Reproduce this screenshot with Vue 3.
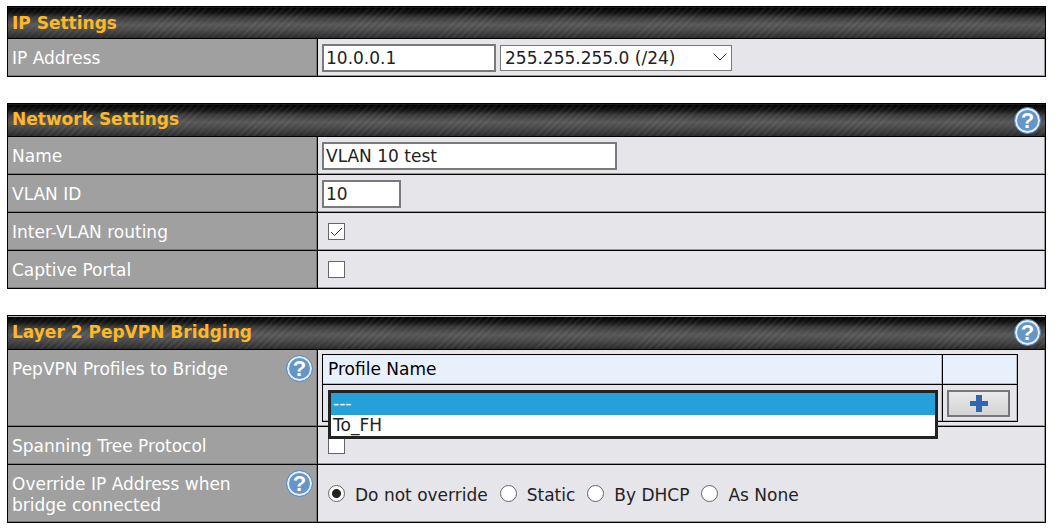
<script setup>
import { ref } from 'vue'

const ip = ref('10.0.0.1')
const mask = ref('255.255.255.0 (/24)')
const name = ref('VLAN 10 test')
const vlanId = ref('10')
const interVlan = ref(true)
const captivePortal = ref(false)
const spanningTree = ref(false)
const profile = ref('---')
const profiles = ['---', 'To_FH']
const override = ref('Do not override')
const overrideOptions = ['Do not override', 'Static', 'By DHCP', 'As None']
</script>

<template>
  <main class="page">
    <table class="panel">
      <colgroup><col class="label-col" /><col /></colgroup>
      <thead>
        <tr><th colspan="2" class="title plain">IP Settings</th></tr>
      </thead>
      <tbody>
        <tr>
          <th class="label" scope="row"><label for="ip">IP Address</label></th>
          <td class="value">
            <div class="fields">
              <input id="ip" v-model="ip" class="text ip" type="text" />
              <span class="select-wrap">
                <select v-model="mask" class="mask" aria-label="Subnet mask">
                  <option>255.255.255.0 (/24)</option>
                </select>
                <svg class="chevron" width="14" height="8" viewBox="0 0 14 8" aria-hidden="true">
                  <path d="M0.5 0.5 L7 7 L13.5 0.5" />
                </svg>
              </span>
            </div>
          </td>
        </tr>
      </tbody>
    </table>

    <table class="panel">
      <colgroup><col class="label-col" /><col /></colgroup>
      <thead>
        <tr>
          <th colspan="2" class="title">
            <div class="bar"><span>Network Settings</span><button class="help" type="button" aria-label="Help">?</button></div>
          </th>
        </tr>
      </thead>
      <tbody>
        <tr>
          <th class="label" scope="row"><label for="name">Name</label></th>
          <td class="value"><div class="fields"><input id="name" v-model="name" class="text name" type="text" /></div></td>
        </tr>
        <tr>
          <th class="label" scope="row"><label for="vlan">VLAN ID</label></th>
          <td class="value"><div class="fields"><input id="vlan" v-model="vlanId" class="text vlan" type="text" /></div></td>
        </tr>
        <tr>
          <th class="label" scope="row"><label for="inter">Inter-VLAN routing</label></th>
          <td class="value"><div class="fields"><span class="check">
            <input id="inter" v-model="interVlan" type="checkbox" />
            <svg v-if="interVlan" class="tick" width="17" height="17" viewBox="0 0 17 17" aria-hidden="true"><path d="M3 9 L6.5 12.5 L14 5" /></svg>
          </span></div></td>
        </tr>
        <tr>
          <th class="label" scope="row"><label for="portal">Captive Portal</label></th>
          <td class="value"><div class="fields"><span class="check"><input id="portal" v-model="captivePortal" type="checkbox" /></span></div></td>
        </tr>
      </tbody>
    </table>

    <table class="panel">
      <colgroup><col class="label-col" /><col /></colgroup>
      <thead>
        <tr>
          <th colspan="2" class="title ruled">
            <div class="bar"><span>Layer 2 PepVPN Bridging</span><button class="help" type="button" aria-label="Help">?</button></div>
          </th>
        </tr>
      </thead>
      <tbody>
        <tr>
          <th class="label" scope="row">
            <div class="with-help"><label for="profile">PepVPN Profiles to Bridge</label><button class="help" type="button" aria-label="Help">?</button></div>
          </th>
          <td class="value">
            <table class="profiles">
              <colgroup><col /><col class="action-col" /></colgroup>
              <thead>
                <tr><th scope="col">Profile Name</th><th></th></tr>
              </thead>
              <tbody>
                <tr>
                  <td>
                    <div class="picker">
                      <select id="profile" v-model="profile" class="profile">
                        <option v-for="p in profiles" :key="p">{{ p }}</option>
                      </select>
                      <ul class="menu" role="listbox" aria-label="Profile Name">
                        <li v-for="p in profiles" :key="p" role="option" :aria-selected="p === profile" :class="{ active: p === profile }" @click="profile = p">{{ p }}</li>
                      </ul>
                    </div>
                  </td>
                  <td>
                    <button class="add" type="button" aria-label="Add profile">
                      <svg width="18" height="17" viewBox="0 0 18 17" aria-hidden="true"><path d="M6 0 H12 V6 H18 V11 H12 V17 H6 V11 H0 V6 H6 Z" /></svg>
                    </button>
                  </td>
                </tr>
              </tbody>
            </table>
          </td>
        </tr>
        <tr>
          <th class="label" scope="row"><label for="stp">Spanning Tree Protocol</label></th>
          <td class="value"><div class="fields"><span class="check"><input id="stp" v-model="spanningTree" type="checkbox" /></span></div></td>
        </tr>
        <tr>
          <th class="label" scope="row">
            <div class="with-help"><span id="override-label">Override IP Address when<br />bridge connected</span><button class="help" type="button" aria-label="Help">?</button></div>
          </th>
          <td class="value">
            <div class="radios" role="radiogroup" aria-labelledby="override-label">
              <label v-for="o in overrideOptions" :key="o" class="radio">
                <input v-model="override" type="radio" name="override" :value="o" />
                <span>{{ o }}</span>
              </label>
            </div>
          </td>
        </tr>
      </tbody>
    </table>
  </main>
</template>

<style>
body {
  margin: 0;
  background: #fff;
}
</style>

<style scoped>
.page {
  padding: 6px 13px 8px 7px;
  font: 17px/21px Verdana, "DejaVu Sans", sans-serif;
  color: #222;
}
.panel {
  width: 100%;
  table-layout: fixed;
  border-collapse: collapse;
  margin-bottom: 26px;
}
.panel:last-child {
  margin-bottom: 0;
}
.label-col {
  width: 310px;
}
.title,
.label,
.value {
  border: 1px solid #000;
  padding: 0;
  text-align: left;
  vertical-align: top;
}
.title {
  height: 31px;
  padding: 0 4px;
  vertical-align: middle;
  color: #fdb827;
  font-size: 17px;
  font-weight: bold;
  background:
    repeating-linear-gradient(135deg, rgba(255, 255, 255, 0.08) 0 1px, transparent 1px 5px),
    linear-gradient(#000 0%, #151515 18%, #3a3a3a 32%, #585858 55%, #4a4a4a 72%, #292929 100%);
}
.plain {
  padding-top: 2px;
  height: 29px;
}
.ruled {
  box-shadow: inset 0 1px #bbb;
}
.bar {
  display: flex;
  align-items: center;
  justify-content: space-between;
  min-height: 32px;
}
.ruled .bar {
  min-height: 33px;
}
.bar span {
  padding-bottom: 1px;
}
.label {
  height: 37px;
  box-sizing: border-box;
  padding: 9px 4px 6px;
  color: #fff;
  font-weight: normal;
  background: #a0a0a0;
  box-shadow: inset -1px -1px #777;
}
.value {
  background: #e6e5ea;
  box-shadow: inset -1px -1px #999;
}
.with-help {
  display: flex;
  align-items: flex-start;
  justify-content: space-between;
}
.with-help .help {
  margin: -4px 0;
}
.help {
  flex: none;
  width: 27px;
  height: 27px;
  padding: 0;
  border: 1px solid #5b8fc4;
  border-radius: 50%;
  background: #6496c8;
  box-shadow: inset 0 0 0 2px #e3eefa;
  color: #fff;
  font: bold 22px/25px "Liberation Sans", Arial, sans-serif;
  text-align: center;
}
.fields {
  display: flex;
  align-items: center;
  gap: 4px;
  min-height: 37px;
  padding: 0 4px;
}
.text,
.mask {
  box-sizing: border-box;
  border: 2px solid #7a7a7a;
  border-radius: 0;
  background: #fff;
  color: #222;
  font: inherit;
}
.text {
  height: 28px;
  padding: 0 2px;
}
.ip {
  width: 174px;
}
.name {
  width: 295px;
}
.vlan {
  width: 79px;
}
.select-wrap {
  position: relative;
}
.mask {
  display: block;
  width: 232px;
  height: 26px;
  padding: 1px 4px 0;
  border-width: 1px;
  appearance: none;
}
.chevron {
  position: absolute;
  top: 8px;
  right: 5px;
  pointer-events: none;
}
.chevron path,
.tick path {
  fill: none;
  stroke: #333;
  stroke-width: 1;
}
.check {
  position: relative;
  display: flex;
  margin-left: 6px;
}
.check input,
.radio input {
  appearance: none;
  box-sizing: border-box;
  flex: none;
  width: 17px;
  height: 17px;
  margin: 0;
  border: 1px solid #666;
  background: #fff;
}
.tick {
  position: absolute;
  inset: 0;
  pointer-events: none;
}
.profiles {
  width: calc(100% - 31px);
  margin: 4px 27px 4px 4px;
  table-layout: fixed;
  border-collapse: collapse;
}
.action-col {
  width: 75px;
}
.profiles th,
.profiles td {
  border: 1px solid #000;
  padding: 0 5px;
  text-align: left;
  box-shadow: inset -1px -1px #b5b5ba;
}
.profiles th {
  height: 29px;
  font-weight: normal;
  color: #000;
  background: #e8f0fc;
}
.profiles td {
  height: 36px;
  padding: 0 4px;
}
.picker {
  position: relative;
  margin-left: 1px;
}
.profile {
  display: block;
  width: 100%;
  height: 26px;
  border: 1px solid #777;
  background: #fff;
  font: inherit;
}
.menu {
  position: absolute;
  z-index: 1;
  top: 0;
  left: 0;
  right: 0;
  margin: 0;
  padding: 0;
  border: 3px solid #222;
  background: #fff;
  list-style: none;
}
.menu li {
  padding: 0 2px;
  line-height: 21px;
}
.menu .active {
  padding-bottom: 1px;
  background: #26a0da;
  color: #fff;
}
.add {
  display: flex;
  align-items: center;
  justify-content: center;
  box-sizing: border-box;
  width: 63px;
  height: 27px;
  padding: 0;
  border: 2px solid #777;
  background: linear-gradient(#e9e9e9, #d4d4d4);
}
.add path {
  fill: #3465af;
}
.radios {
  display: flex;
  flex-wrap: wrap;
  gap: 12px;
  min-height: 57px;
  align-items: center;
  padding: 0 10px;
}
.radio {
  display: flex;
  align-items: center;
  gap: 10px;
}
.radio span {
  padding-top: 4px;
}
.radio input {
  border-radius: 50%;
}
.radio input:checked {
  background: radial-gradient(circle, #222 4px, #fff 5px);
}
</style>
